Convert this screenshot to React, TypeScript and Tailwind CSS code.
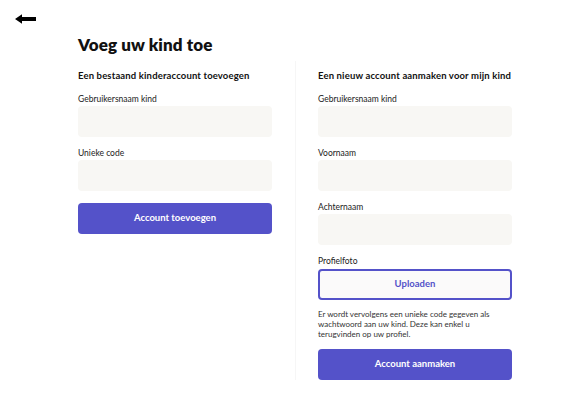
import React from "react";

const font = { fontFamily: "Lato, 'Noto Sans', sans-serif" };

function Field({ label, gap = "mt-[11px]" }: { label: string; gap?: string }) {
  return (
    <div className={gap}>
      <div className="text-[8.5px] leading-[10px] text-[#222] mb-[2px]">{label}</div>
      <div className="h-[31px] rounded-[4px] bg-[#f8f7f4]" />
    </div>
  );
}

export default function App() {
  return (
    <div className="w-[579px] h-[405px] bg-white relative text-[#111]" style={font}>
      <div className="absolute left-[15px] top-[14px]">
        <svg width="22" height="10" viewBox="0 0 22 10">
          <path d="M0 5 L7 0.3 L7 3 L21 3 L21 7 L7 7 L7 9.7 Z" fill="#000" />
        </svg>
      </div>
      <div className="pl-[78px] pt-[35px]">
        <h1 className="text-[17px] font-extrabold leading-[20px] tracking-[0.1px]">Voeg uw kind toe</h1>
        <div className="flex mt-[15px]">
          <div className="w-[194px]">
            <h2 className="text-[9.5px] font-bold leading-[12px] tracking-[0.15px]">Een bestaand kinderaccount toevoegen</h2>
            <Field label="Gebruikersnaam kind" gap="mt-[12px]" />
            <Field label="Unieke code" />
            <button className="mt-[12px] w-full h-[31px] rounded-[4px] bg-[#5452c9] text-white text-[9.5px] font-bold">
              Account toevoegen
            </button>
          </div>
          <div className="w-px bg-[#f6f6f6] ml-[23px] mt-[-9px] self-stretch" />
          <div className="w-[194px] ml-[22px]">
            <h2 className="text-[9.5px] font-bold leading-[12px] tracking-[0.15px]">Een nieuw account aanmaken voor mijn kind</h2>
            <Field label="Gebruikersnaam kind" gap="mt-[12px]" />
            <Field label="Voornaam" />
            <Field label="Achternaam" />
            <div className="mt-[11px]">
              <div className="text-[8.5px] leading-[10px] text-[#222] mb-[3px]">Profielfoto</div>
              <button className="w-full h-[31px] rounded-[4px] border-2 border-[#5452c9] bg-[#fbfafa] text-[#5452c9] text-[9.5px] font-bold">
                Uploaden
              </button>
            </div>
            <p className="mt-[9px] text-[8px] leading-[10px] text-[#333]">
              Er wordt vervolgens een unieke code gegeven als wachtwoord aan uw kind. Deze kan enkel u terugvinden op uw profiel.
            </p>
            <button className="mt-[10px] w-full h-[31px] rounded-[4px] bg-[#5452c9] text-white text-[9.5px] font-bold">
              Account aanmaken
            </button>
          </div>
        </div>
      </div>
    </div>
  );
}
